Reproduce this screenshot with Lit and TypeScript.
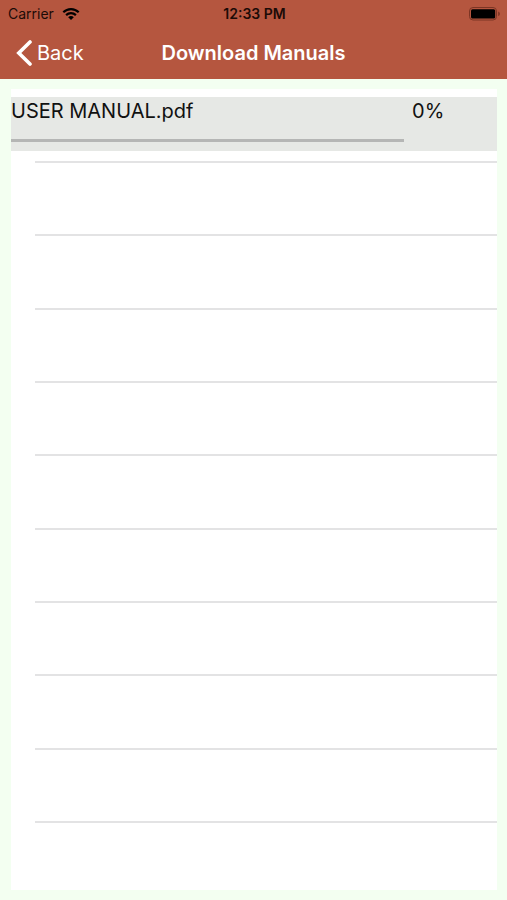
import { LitElement, html, css } from "lit";
import { customElement, property, state } from "lit/decorators.js";

interface Manual {
  name: string;
  percent: number;
}

@customElement("status-bar")
class StatusBar extends LitElement {
  static styles = css`
    :host {
      display: grid;
      grid-template-columns: 1fr auto 1fr;
      align-items: center;
      height: 26px;
      padding: 0 6px 0 8px;
      color: #1c0b07;
      font-size: 14px;
      line-height: 28px;
    }
    .carrier {
      display: flex;
      align-items: center;
      gap: 8px;
    }
    .time {
      font-weight: 600;
    }
    .battery {
      justify-self: end;
    }
    svg {
      display: block;
    }
  `;

  render() {
    return html`
      <div class="carrier">
        <span>Carrier</span>
        <svg width="18" height="14" viewBox="0 0 18 14" aria-label="Wi-Fi">
          <g fill="none" stroke="#000" stroke-width="2.2">
            <path d="M1.3 5.3C5.6 1 12.4 1 16.7 5.3" />
            <path d="M4.1 8.1C6.9 5.4 11.1 5.4 13.9 8.1" />
          </g>
          <path d="M9 13 6.2 10.2C7.8 8.7 10.2 8.7 11.8 10.2Z" fill="#000" />
        </svg>
      </div>
      <span class="time">12:33 PM</span>
      <svg class="battery" width="32" height="14" viewBox="0 0 32 14" aria-label="Battery full">
        <rect x="0.5" y="0.5" width="27" height="12.5" rx="3.5" fill="none" stroke="#7c3524" />
        <rect x="2" y="2.2" width="24.2" height="9.2" rx="1.5" fill="#000" />
        <path d="M29.2 4.5C31.4 5.3 31.4 8.3 29.2 9.1Z" fill="#7c3524" />
      </svg>
    `;
  }
}

@customElement("nav-bar")
class NavBar extends LitElement {
  @property() heading = "";

  static styles = css`
    :host {
      display: grid;
      grid-template-columns: 1fr auto 1fr;
      align-items: center;
      height: 53px;
      padding: 0 16px;
      color: #fff;
    }
    .back {
      display: flex;
      align-items: center;
      justify-self: start;
      gap: 5px;
      padding: 0;
      border: 0;
      background: none;
      color: inherit;
      font: inherit;
      font-size: 20px;
      line-height: 28px;
    }
    h1 {
      margin: 0;
      font-size: 20px;
      font-weight: 600;
      line-height: 28px;
    }
  `;

  render() {
    return html`
      <button class="back" type="button">
        <svg width="16" height="26" viewBox="0 0 16 26" aria-hidden="true">
          <path d="M14 2 2.8 13 14 24" fill="none" stroke="#fff" stroke-width="3.6" stroke-linecap="round" stroke-linejoin="miter" />
        </svg>
        <span>Back</span>
      </button>
      <h1>${this.heading}</h1>
    `;
  }
}

@customElement("manual-row")
class ManualRow extends LitElement {
  @property({ attribute: false }) manual: Manual = { name: "", percent: 0 };

  static styles = css`
    :host {
      display: grid;
      grid-template-columns: 1fr 85px;
      column-gap: 8px;
      align-content: start;
      height: 54px;
      background: #e6e8e5;
      color: #111;
      font-size: 20px;
      line-height: 28px;
    }
    progress {
      appearance: none;
      display: block;
      width: 100%;
      height: 3px;
      margin-top: 14px;
      border: 0;
      background: #b5b6b5;
    }
    progress::-webkit-progress-bar {
      background: #b5b6b5;
    }
    progress::-webkit-progress-value {
      background: #b5563f;
    }
  `;

  render() {
    const { name, percent } = this.manual;
    return html`
      <label for="bar">${name}</label>
      <span>${percent}%</span>
      <progress id="bar" max="100" value=${percent}></progress>
    `;
  }
}

@customElement("app-root")
class AppRoot extends LitElement {
  @state() private manuals: Manual[] = [{ name: "USER MANUAL.pdf", percent: 0 }];

  static styles = css`
    :host {
      display: flex;
      flex-direction: column;
      box-sizing: border-box;
      min-height: 100vh;
      background: #f3fff1;
      font-family: Inter, "Liberation Sans", sans-serif;
    }
    header {
      background: #b5563f;
    }
    main {
      flex: 1;
      display: flex;
      flex-direction: column;
      margin: 10px 10px 10px 11px;
      padding: 8px 0 67px;
      background: #fff;
    }
    .empty {
      flex: 1;
      display: grid;
      grid-template-rows: 12px;
      grid-auto-rows: 1fr;
      margin-left: 24px;
    }
    .slot {
      border-bottom: 2px solid #e3e3e4;
    }
  `;

  render() {
    return html`
      <header>
        <status-bar></status-bar>
        <nav-bar heading="Download Manuals"></nav-bar>
      </header>
      <main>
        ${this.manuals.map((m) => html`<manual-row .manual=${m}></manual-row>`)}
        <div class="empty" aria-hidden="true">
          ${Array.from({ length: 10 }, () => html`<div class="slot"></div>`)}
        </div>
      </main>
    `;
  }
}
